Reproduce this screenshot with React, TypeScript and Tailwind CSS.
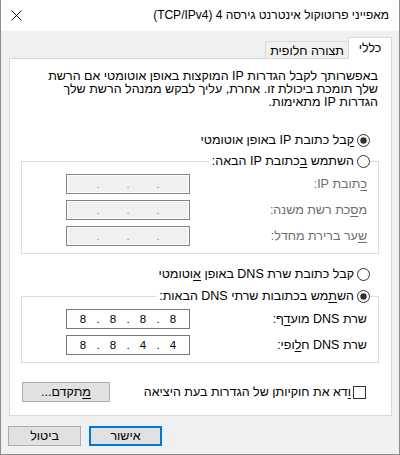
import React from "react";

function Radio({ checked }: { checked: boolean }) {
  return (
    <svg width="13" height="13" viewBox="0 0 13 13" className="shrink-0 block">
      <circle cx="6.5" cy="6.5" r="6" fill="#ffffff" stroke="#333333" strokeWidth="1" />
      {checked ? <circle cx="6.5" cy="6.5" r="3.2" fill="#333333" /> : null}
    </svg>
  );
}

function U({ c }: { c: string }) {
  return <span className="underline underline-offset-[2px]">{c}</span>;
}

function IpField({ values, disabled }: { values: string[]; disabled: boolean }) {
  const cls = disabled
    ? "flex items-center h-[20px] w-[124px] border border-[#838383] bg-[#f0f0f0] shadow-[inset_0_0_0_1px_#ffffff] pl-[4px] text-[#8a8a8a] text-[11px]"
    : "flex items-center h-[20px] w-[124px] border border-[#7a7a7a] bg-white pl-[4px] text-black text-[11.5px]";
  return (
    <div dir="ltr" className={cls}>
      <span className="w-[24px] text-center">{values[0]}</span>
      <span className="w-[6px] text-center">.</span>
      <span className="w-[24px] text-center">{values[1]}</span>
      <span className="w-[6px] text-center">.</span>
      <span className="w-[24px] text-center">{values[2]}</span>
      <span className="w-[6px] text-center">.</span>
      <span className="w-[24px] text-center">{values[3]}</span>
    </div>
  );
}

export default function App() {
  return (
    <div
      dir="rtl"
      className="w-[400px] h-[455px] flex flex-col bg-[#f0f0f0] border-x border-b border-[#8c8c8c] font-['Liberation_Sans',Arial,'DejaVu_Sans',sans-serif] text-[12.5px] leading-[13px] text-black overflow-hidden"
    >
      {/* Title bar */}
      <div className="h-[31px] shrink-0 bg-white flex items-center justify-between pr-[10px] pl-[10px] text-[12px]">
        <span className="whitespace-nowrap">מאפייני פרוטוקול אינטרנט גירסה 4 (TCP/IPv4)</span>
        <svg width="11" height="11" viewBox="0 0 11 11" className="block">
          <path d="M0.5 0.5 L10.5 10.5 M10.5 0.5 L0.5 10.5" stroke="#111111" strokeWidth="1" fill="none" />
        </svg>
      </div>

      {/* Tabs */}
      <div className="flex items-end mt-[6px] mr-[7px] h-[21px] shrink-0">
        <div className="relative z-10 -mb-px h-[22px] w-[44px] bg-white border border-b-0 border-[#d9d9d9] flex items-center justify-center">
          כללי
        </div>
        <div className="h-[17px] w-[83px] border-t border-l border-[#d9d9d9] bg-[#f0f0f0] flex items-center justify-center pt-[2px]">
          תצורה חלופית
        </div>
      </div>

      {/* Panel */}
      <div className="ml-[8px] mr-[7px] h-[358px] shrink-0 bg-white border border-[#d9d9d9] flex flex-col">
        <p className="mt-[11px] mr-[13px] whitespace-nowrap leading-[13px]">
          באפשרותך לקבל הגדרות IP המוקצות באופן אוטומטי אם הרשת
          <br />
          שלך תומכת ביכולת זו. אחרת, עליך לבקש ממנהל הרשת שלך
          <br />
          הגדרות IP מתאימות.
        </p>

        <div className="mt-[23px] mr-[21px] h-[16px] flex items-center gap-[3px]">
          <Radio checked={true} />
          <span className="whitespace-nowrap">
            <U c="ק" />
            בל כתובת IP באופן אוטומטי
          </span>
        </div>

        <fieldset className="mt-[5px] ml-[11px] mr-[12px] border border-[#dcdcdc] p-0 m-0">
          <legend className="ms-[8px] p-0 pl-[3px]">
            <span className="h-[16px] flex items-center gap-[3px] bg-white">
              <Radio checked={false} />
              <span className="whitespace-nowrap">
                השתמש <U c="ב" />
                כתובת IP הבאה:
              </span>
            </span>
          </legend>
          <div className="flex flex-col gap-[6px] pt-[5px] pb-[7px] pl-[44px] pr-[11px]">
            <div className="h-[20px] flex items-center justify-between">
              <span className="text-[#6d6d6d] whitespace-nowrap">
                <U c="כ" />
                תובת IP:
              </span>
              <IpField values={["", "", "", ""]} disabled={true} />
            </div>
            <div className="h-[20px] flex items-center justify-between">
              <span className="text-[#6d6d6d] whitespace-nowrap">
                מ<U c="ס" />
                כת רשת משנה:
              </span>
              <IpField values={["", "", "", ""]} disabled={true} />
            </div>
            <div className="h-[20px] flex items-center justify-between">
              <span className="text-[#6d6d6d] whitespace-nowrap">
                <U c="ש" />
                ער ברירת מחדל:
              </span>
              <IpField values={["", "", "", ""]} disabled={true} />
            </div>
          </div>
        </fieldset>

        <div className="mt-[12px] mr-[21px] h-[16px] flex items-center gap-[3px]">
          <Radio checked={false} />
          <span className="whitespace-nowrap">
            קבל כתובת שרת DNS באופן <U c="א" />
            וטומטי
          </span>
        </div>

        <fieldset className="mt-[6px] ml-[11px] mr-[12px] border border-[#dcdcdc] p-0 m-0">
          <legend className="ms-[8px] p-0 pl-[3px]">
            <span className="h-[16px] flex items-center gap-[3px] bg-white">
              <Radio checked={true} />
              <span className="whitespace-nowrap">
                הש<U c="ת" />
                מש בכתובות שרתי DNS הבאות:
              </span>
            </span>
          </legend>
          <div className="flex flex-col gap-[6px] pt-[5px] pb-[7px] pl-[44px] pr-[11px]">
            <div className="h-[20px] flex items-center justify-between">
              <span className="whitespace-nowrap">
                שרת DNS מוע<U c="ד" />
                ף:
              </span>
              <IpField values={["8", "8", "8", "8"]} disabled={false} />
            </div>
            <div className="h-[20px] flex items-center justify-between">
              <span className="whitespace-nowrap">
                שרת DNS ח<U c="ל" />
                ופי:
              </span>
              <IpField values={["8", "8", "4", "4"]} disabled={false} />
            </div>
          </div>
        </fieldset>

        <div className="mt-[19px] mr-[25px] ml-[12px] h-[20px] flex items-center justify-between">
          <div className="flex items-center gap-[2px]">
            <span className="w-[13px] h-[13px] border border-[#333333] bg-white shrink-0" />
            <span className="whitespace-nowrap">
              <U c="ו" />
              דא את חוקיותן של הגדרות בעת היציאה
            </span>
          </div>
          <button className="w-[88px] h-[20px] bg-[#e1e1e1] border border-[#adadad] flex items-center justify-center">
            <span>
              <U c="מ" />
              תקדם...
            </span>
          </button>
        </div>
      </div>

      {/* Bottom buttons */}
      <div className="mt-[10px] ml-[7px] flex justify-end gap-[8px]">
        <button className="w-[73px] h-[20px] bg-[#e1e1e1] border-2 border-[#0078d7] flex items-center justify-center">
          אישור
        </button>
        <button className="w-[73px] h-[20px] bg-[#e1e1e1] border border-[#adadad] flex items-center justify-center">
          ביטול
        </button>
      </div>
    </div>
  );
}
